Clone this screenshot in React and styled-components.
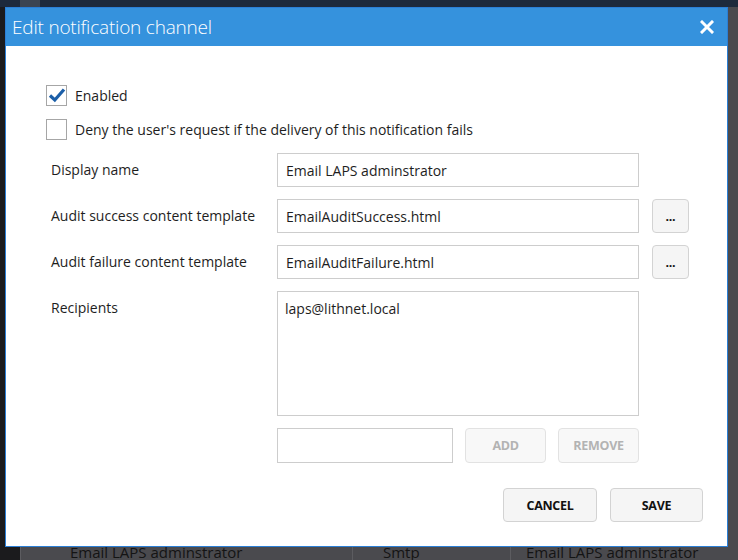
import styled, { createGlobalStyle } from 'styled-components';

const GlobalStyle = createGlobalStyle`
  html, body {
    margin: 0;
    padding: 0;
    background: #4a4a4e;
  }
  * { box-sizing: border-box; }
`;

const Page = styled.div`
  position: relative;
  width: 738px;
  height: 560px;
  overflow: hidden;
  display: grid;
  grid-template-columns: 20px 1fr;
  grid-template-rows: 7px 1fr;
  font-family: 'Open Sans', 'Noto Sans', sans-serif;
`;

const TopBar = styled.div`
  grid-column: 1 / 3;
  background: #1d2a3c;
  display: flex;
`;

const TopTab = styled.div`
  width: 20px;
  margin-left: 20px;
  background: #3b4552;
`;

const SideRail = styled.div`
  background: #1b1b1d;
`;

const Backdrop = styled.div`
  background: #4a4a4e;
  display: flex;
  flex-direction: column;
  justify-content: flex-end;
`;

const BgRow = styled.div`
  display: grid;
  grid-template-columns: 42px 290px 158px 1fr;
  height: 14px;
  font-size: 15px;
  line-height: 20px;
  color: #141414;
`;

const BgCell = styled.div`
  border-left: ${p => (p.$line ? '1px solid #5c5c60' : 'none')};
  padding-left: ${p => p.$pad || 8}px;
  white-space: nowrap;
  margin-top: -4px;
`;

const Dialog = styled.div`
  position: absolute;
  left: 5px;
  top: 7px;
  width: 723px;
  height: 540px;
  background: #fff;
  border: 1px solid #2b7fd6;
  display: flex;
  flex-direction: column;
`;

const TitleBar = styled.div`
  height: 38px;
  background: #3592dd;
  display: flex;
  align-items: center;
  justify-content: space-between;
  padding: 0 12px 0 6px;
  color: #fff;
`;

const Title = styled.div`
  font-size: 19px;
  font-weight: 300;
  letter-spacing: -0.2px;
`;

const CloseButton = styled.div`
  width: 16px;
  height: 16px;
  display: flex;
  align-items: center;
  justify-content: center;
`;

const Body = styled.div`
  flex: 1;
  padding: 39px 0 0 40px;
  display: flex;
  flex-direction: column;
`;

const CheckRow = styled.label`
  display: flex;
  align-items: center;
  gap: 8px;
  height: 20px;
  margin-bottom: ${p => p.$mb || 0}px;
  font-size: 14px;
  color: #1e1e1e;
`;

const Box = styled.span`
  width: 21px;
  height: 21px;
  border: 1px solid #a6a6a6;
  background: #fff;
  display: flex;
  align-items: center;
  justify-content: center;
`;

const Form = styled.div`
  display: grid;
  grid-template-columns: 213px 362px 37px;
  column-gap: 13px;
  padding-left: 5px;
  margin-top: 14px;
`;

const Label = styled.div`
  font-size: 14px;
  color: #1e1e1e;
  padding-top: ${p => p.$top || 7}px;
  margin-bottom: ${p => p.$mb || 12}px;
`;

const TextInput = styled.div`
  height: 34px;
  border: 1px solid #cdcdcd;
  padding: 0 8px;
  display: flex;
  align-items: center;
  font-size: 14px;
  color: #1e1e1e;
  margin-bottom: ${p => p.$mb || 12}px;
`;

const TextArea = styled.div`
  height: 125px;
  border: 1px solid #cdcdcd;
  padding: 7px 7px;
  font-size: 14px;
  color: #1e1e1e;
  margin-bottom: 12px;
`;

const Button = styled.button`
  height: ${p => p.$h || 34}px;
  width: ${p => p.$w}px;
  border: 1px solid ${p => (p.disabled ? '#e2e2e2' : '#d3d3d3')};
  border-radius: 4px;
  background: ${p => (p.disabled ? '#f8f8f8' : '#f5f5f5')};
  color: ${p => (p.disabled ? '#b3b3b3' : '#111')};
  font-family: 'Open Sans', 'Noto Sans', sans-serif;
  font-weight: 700;
  font-size: 12.5px;
  letter-spacing: -0.3px;
  padding: 0;
  cursor: default;
`;

const EntryRow = styled.div`
  display: flex;
  gap: 12px;
`;

const SmallInput = styled.div`
  width: 176px;
  height: 35px;
  border: 1px solid #cdcdcd;
`;

const Footer = styled.div`
  display: flex;
  justify-content: flex-end;
  gap: 13px;
  padding: 25px 24px 0 0;
`;

const Check = () => (
  <svg width="18" height="16" viewBox="0 0 18 16">
    <path d="M2 8.5 L6.8 13 L16 2.5" fill="none" stroke="#1c5fa8" strokeWidth="3.2" strokeLinejoin="miter" />
  </svg>
);

const Close = () => (
  <svg width="14" height="14" viewBox="0 0 14 14">
    <path d="M2 2 L12 12 M12 2 L2 12" stroke="#fff" strokeWidth="3" strokeLinecap="square" />
  </svg>
);

const App = () => {
  return (
    <>
      <GlobalStyle />
      <Page>
        <TopBar>
          <TopTab />
        </TopBar>
        <SideRail />
        <Backdrop>
          <BgRow>
            <BgCell $line />
            <BgCell $pad={8}>Email LAPS adminstrator</BgCell>
            <BgCell $line $pad={30}>Smtp</BgCell>
            <BgCell $line $pad={15}>Email LAPS adminstrator</BgCell>
          </BgRow>
        </Backdrop>

        <Dialog>
          <TitleBar>
            <Title>Edit notification channel</Title>
            <CloseButton>
              <Close />
            </CloseButton>
          </TitleBar>
          <Body>
            <CheckRow $mb={14}>
              <Box>
                <Check />
              </Box>
              Enabled
            </CheckRow>
            <CheckRow>
              <Box />
              Deny the user's request if the delivery of this notification fails
            </CheckRow>

            <Form>
              <Label>Display name</Label>
              <TextInput>Email LAPS adminstrator</TextInput>
              <div />

              <Label>Audit success content template</Label>
              <TextInput>EmailAuditSuccess.html</TextInput>
              <Button $w={37}>...</Button>

              <Label>Audit failure content template</Label>
              <TextInput>EmailAuditFailure.html</TextInput>
              <Button $w={37}>...</Button>

              <Label>Recipients</Label>
              <TextArea>laps@lithnet.local</TextArea>
              <div />

              <div />
              <EntryRow>
                <SmallInput />
                <Button $w={81} $h={35} disabled>ADD</Button>
                <Button $w={81} $h={35} disabled>REMOVE</Button>
              </EntryRow>
              <div />
            </Form>

            <Footer>
              <Button $w={94}>CANCEL</Button>
              <Button $w={93}>SAVE</Button>
            </Footer>
          </Body>
        </Dialog>
      </Page>
    </>
  );
};

export default App;
